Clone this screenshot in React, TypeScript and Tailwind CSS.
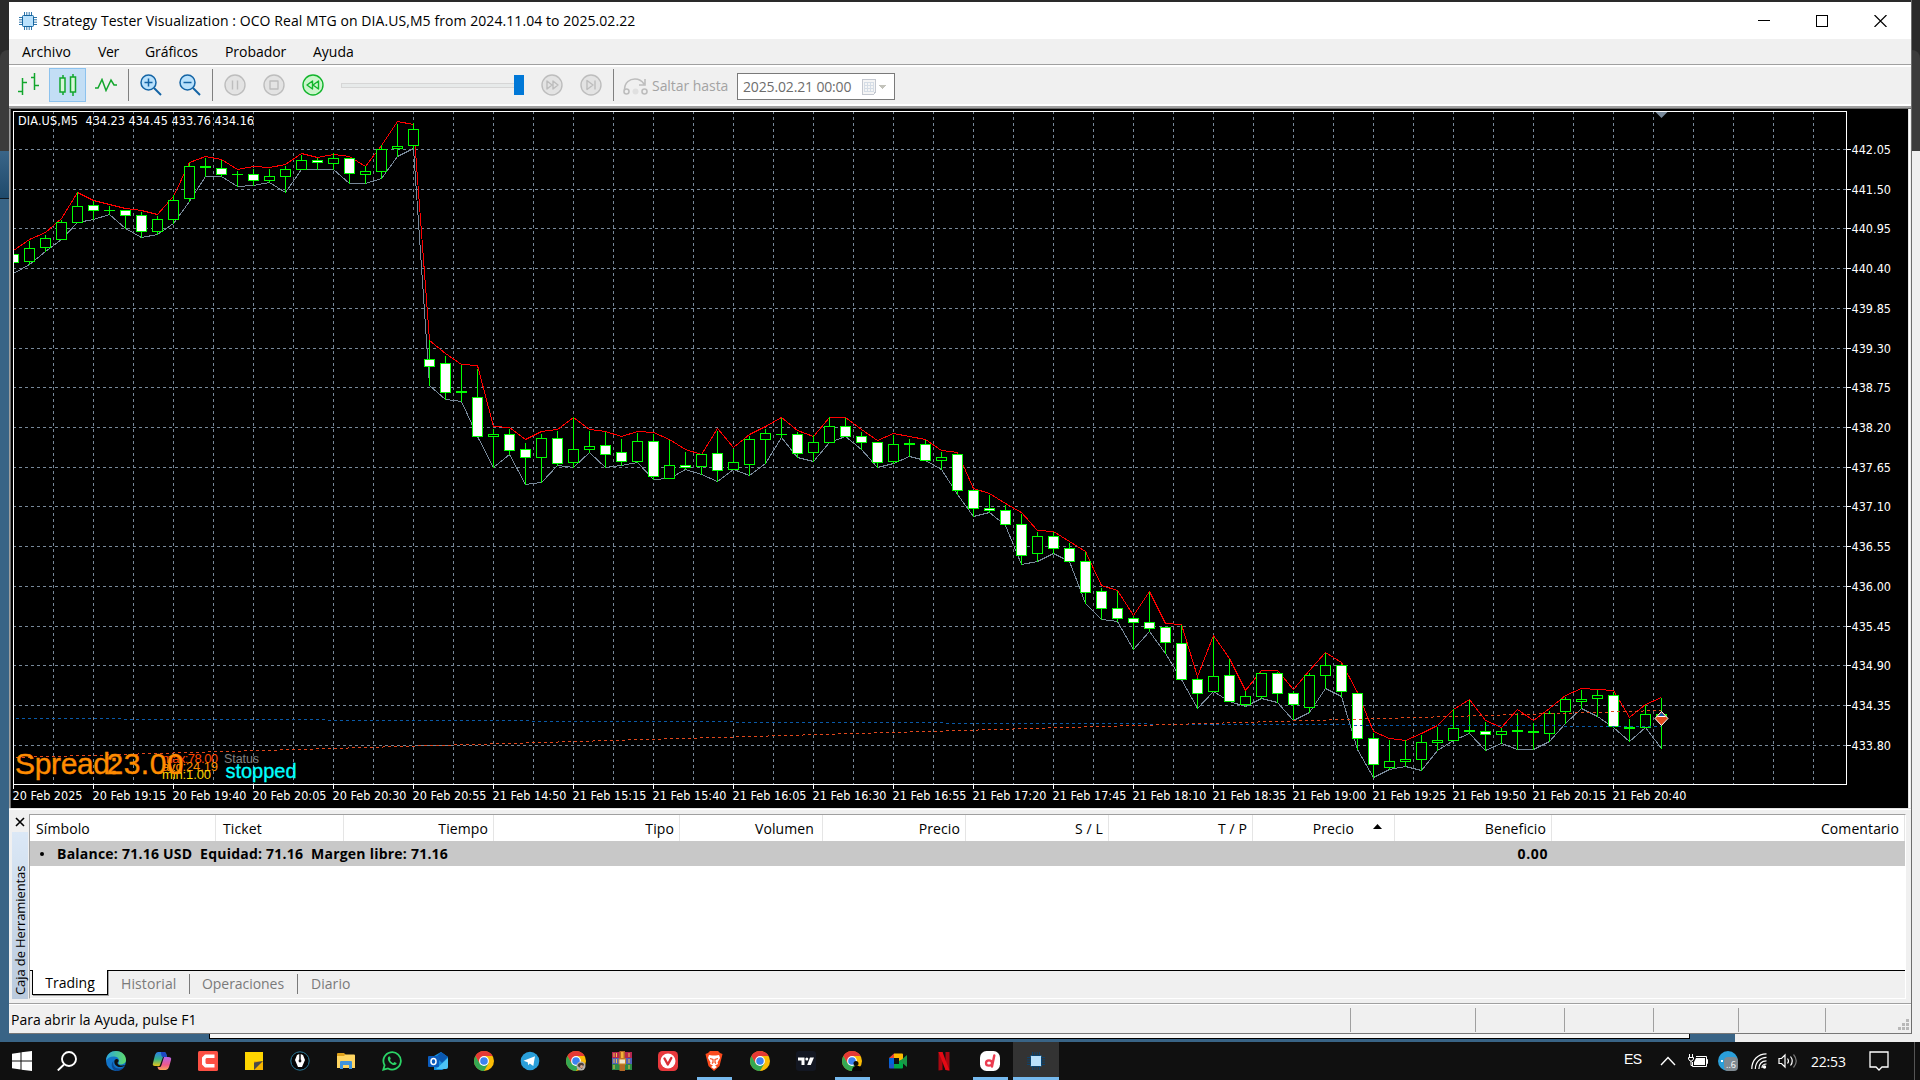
import { ReactNode } from "react";

type Candle = {
  x: number;
  high: number;
  top: number;
  bottom: number;
  low: number;
  down: boolean;
  upper: number;
};

// [high, top, bottom, low, bearish, upper band]
const rows: number[][] = [
  [254, 254, 262, 262, 1, 250],
  [241, 248, 261, 264, 0, 239],
  [235, 238, 247, 251, 0, 232],
  [220, 222, 239, 239, 0, 218],
  [192, 206, 222, 222, 0, 192],
  [201, 205, 210, 219, 1, 200],
  [206, 210, 210, 214, 0, 204],
  [210, 210, 215, 228, 1, 208],
  [212, 215, 231, 237, 1, 210],
  [216, 219, 231, 234, 0, 214],
  [195, 200, 219, 223, 0, 196],
  [163, 166, 198, 201, 0, 162],
  [158, 166, 167, 176, 0, 156],
  [160, 168, 174, 176, 1, 159],
  [171, 174, 174, 186, 0, 169],
  [169, 174, 180, 185, 1, 166],
  [169, 176, 180, 182, 0, 167],
  [166, 169, 176, 192, 0, 164],
  [155, 160, 169, 169, 0, 153],
  [158, 160, 162, 169, 1, 157],
  [153, 158, 163, 169, 0, 154],
  [158, 158, 173, 183, 1, 156],
  [166, 171, 174, 183, 0, 166],
  [145, 149, 171, 178, 0, 145],
  [124, 146, 148, 156, 0, 121],
  [123, 129, 145, 148, 0, 124],
  [340, 359, 366, 385, 1, 340],
  [356, 363, 392, 399, 1, 353],
  [365, 391, 392, 401, 0, 364],
  [369, 397, 436, 436, 1, 365],
  [429, 434, 436, 467, 0, 426],
  [429, 434, 450, 454, 1, 427],
  [443, 449, 457, 484, 1, 439],
  [434, 438, 457, 482, 0, 431],
  [431, 438, 463, 465, 1, 429],
  [417, 449, 462, 467, 0, 417],
  [431, 446, 449, 452, 0, 429],
  [432, 445, 454, 467, 1, 431],
  [439, 452, 461, 465, 1, 436],
  [433, 441, 461, 462, 0, 431],
  [434, 441, 476, 479, 1, 432],
  [440, 465, 478, 478, 0, 439],
  [452, 465, 467, 469, 1, 449],
  [454, 454, 466, 474, 0, 454],
  [431, 453, 470, 481, 1, 428],
  [449, 462, 469, 469, 0, 447],
  [436, 439, 464, 475, 0, 434],
  [429, 433, 439, 463, 0, 426],
  [418, 434, 434, 437, 0, 417],
  [432, 434, 453, 457, 1, 430],
  [435, 442, 452, 461, 0, 436],
  [417, 426, 442, 442, 0, 417],
  [418, 426, 436, 436, 1, 417],
  [432, 436, 442, 449, 1, 429],
  [442, 442, 462, 467, 1, 440],
  [435, 444, 461, 463, 0, 433],
  [439, 443, 444, 456, 0, 436],
  [440, 444, 460, 460, 1, 439],
  [452, 457, 460, 469, 0, 450],
  [454, 454, 490, 494, 1, 452],
  [490, 490, 508, 516, 1, 488],
  [495, 508, 510, 512, 1, 493],
  [505, 510, 524, 525, 1, 503],
  [514, 524, 555, 564, 1, 512],
  [532, 536, 553, 561, 0, 530],
  [532, 536, 548, 553, 1, 531],
  [543, 548, 561, 561, 1, 541],
  [552, 561, 592, 603, 1, 551],
  [588, 591, 608, 619, 1, 585],
  [591, 608, 618, 621, 1, 590],
  [616, 618, 622, 649, 1, 615],
  [592, 622, 628, 631, 1, 591],
  [627, 627, 642, 653, 1, 623],
  [625, 643, 679, 679, 1, 624],
  [678, 679, 693, 708, 1, 676],
  [637, 676, 691, 691, 0, 635],
  [659, 675, 701, 701, 1, 658],
  [691, 696, 704, 706, 0, 690],
  [673, 673, 696, 698, 0, 670],
  [672, 673, 693, 702, 1, 670],
  [691, 693, 704, 720, 1, 689],
  [673, 675, 707, 712, 0, 670],
  [653, 665, 675, 688, 0, 652],
  [664, 665, 691, 696, 1, 662],
  [693, 693, 738, 749, 1, 692],
  [733, 738, 764, 777, 1, 731],
  [740, 761, 767, 769, 0, 738],
  [740, 759, 761, 766, 0, 740],
  [735, 742, 759, 770, 0, 733],
  [727, 740, 742, 750, 0, 725],
  [709, 728, 740, 740, 0, 709],
  [700, 730, 731, 733, 0, 699],
  [722, 731, 734, 750, 1, 720],
  [728, 731, 734, 743, 0, 727],
  [713, 730, 731, 749, 0, 709],
  [723, 731, 732, 749, 0, 720],
  [711, 713, 733, 741, 0, 708],
  [697, 699, 711, 723, 0, 695],
  [690, 699, 701, 708, 0, 688],
  [690, 695, 698, 716, 0, 689],
  [692, 695, 726, 727, 1, 690],
  [719, 727, 728, 741, 0, 717],
  [705, 714, 727, 727, 0, 704],
  [698, 714, 717, 748, 0, 697],
];

const candles: Candle[] = rows.map(([high, top, bottom, low, down, upper], i) => ({
  x: 13 + i * 16,
  high,
  top,
  bottom,
  low,
  down: down === 1,
  upper,
}));

const priceLevels: [number, string][] = [
  [149, "442.05"],
  [189, "441.50"],
  [228, "440.95"],
  [268, "440.40"],
  [308, "439.85"],
  [348, "439.30"],
  [387, "438.75"],
  [427, "438.20"],
  [467, "437.65"],
  [506, "437.10"],
  [546, "436.55"],
  [586, "436.00"],
  [626, "435.45"],
  [665, "434.90"],
  [705, "434.35"],
  [745, "433.80"],
];

const times = [
  "20 Feb 2025",
  "20 Feb 19:15",
  "20 Feb 19:40",
  "20 Feb 20:05",
  "20 Feb 20:30",
  "20 Feb 20:55",
  "21 Feb 14:50",
  "21 Feb 15:15",
  "21 Feb 15:40",
  "21 Feb 16:05",
  "21 Feb 16:30",
  "21 Feb 16:55",
  "21 Feb 17:20",
  "21 Feb 17:45",
  "21 Feb 18:10",
  "21 Feb 18:35",
  "21 Feb 19:00",
  "21 Feb 19:25",
  "21 Feb 19:50",
  "21 Feb 20:15",
  "21 Feb 20:40",
];

const verticals = Array.from({ length: 45 }, (_, i) => 53 + i * 40);

const PriceChart = () => {
  const upper = candles.map((c) => `${c.x + 0.5},${c.upper + 0.5}`).join(" ");
  const lower = candles.map((c, i) => `${c.x + 0.5},${(i === 0 ? 273 : c.low) + 0.5}`).join(" ");

  return (
    <svg
      className="block bg-black font-['DejaVu_Sans_Condensed','DejaVu_Sans',sans-serif] text-[12.5px]"
      width="1897"
      height="699"
      viewBox="11 109 1897 699"
    >
      <clipPath id="plot">
        <rect x="14" y="112" width="1832" height="672" />
      </clipPath>
      <g shapeRendering="crispEdges" clipPath="url(#plot)">
        <g stroke="#778899" strokeDasharray="3 3">
          {priceLevels.map(([y]) => (
            <line key={y} x1="13" x2="1846" y1={y + 0.5} y2={y + 0.5} />
          ))}
          {verticals.map((x) => (
            <line key={x} x1={x + 0.5} x2={x + 0.5} y1="111" y2="784" />
          ))}
        </g>
        <polyline points={lower} fill="none" stroke="#778899" />
        <polyline points={upper} fill="none" stroke="#ff0000" />
        <g stroke="#00ff00">
          {candles.map((c) => (
            <g key={c.x}>
              <line x1={c.x + 0.5} x2={c.x + 0.5} y1={c.high} y2={c.low + 1} />
              {c.bottom === c.top ? (
                <line x1={c.x - 5} x2={c.x + 6} y1={c.top + 0.5} y2={c.top + 0.5} />
              ) : (
                <rect
                  x={c.x - 4.5}
                  y={c.top + 0.5}
                  width="10"
                  height={c.bottom - c.top}
                  fill={c.down ? "#ffffff" : "#000000"}
                />
              )}
            </g>
          ))}
        </g>
        <line x1="16" y1="718.5" x2="1661" y2="726.5" stroke="#0a5aa8" strokeDasharray="3 3" />
        <line x1="16" y1="757.5" x2="1661" y2="710.5" stroke="#e1471c" strokeDasharray="3 3" />
      </g>

      {/* open / close position markers */}
      <path d="M1661.5 711.5 L1668 718.5 L1661.5 725.5 L1655 718.5 Z" fill="#e1471c" stroke="#fff" />
      <path d="M1661.5 712.5 L1665 716.5 L1658 716.5 Z" fill="#0a5aa8" />
      <path d="M1657.5 716.5 H1665.5" stroke="#fff" />
      <path d="M1655.5 112 H1667.5 L1661.5 118 Z" fill="#778899" />

      <g shapeRendering="crispEdges" stroke="#ffffff">
        <path d="M13.5 784.5 V111.5 H1846.5 V784.5 Z" fill="none" />
        {priceLevels.map(([y]) => (
          <line key={y} x1="1846" x2="1851" y1={y + 0.5} y2={y + 0.5} />
        ))}
        {times.map((t, i) => (
          <line key={t} x1={13.5 + i * 80} x2={13.5 + i * 80} y1="784" y2="789" />
        ))}
      </g>

      <g fill="#ffffff">
        {priceLevels.map(([y, label]) => (
          <text key={label} x="1851.5" y={y + 5} textLength="39.5">
            {label}
          </text>
        ))}
        {times.map((t, i) => (
          <text key={t} x={12.5 + i * 80} y="800" textLength={i === 0 ? 70 : 74}>
            {t}
          </text>
        ))}
        <text x="18" y="125" textLength="60">
          DIA.US,M5
        </text>
        <text x="85.5" y="125" textLength="168.5">
          434.23 434.45 433.76 434.16
        </text>
      </g>

      <g className="font-['Liberation_Sans',Arial,sans-serif]">
        <text x="162" y="763" fontSize="13" fill="#ff4500" textLength="56">
          max:78.00
        </text>
        <text x="162" y="771" fontSize="13" fill="#ff8c00" textLength="56">
          avg:24.19
        </text>
        <text x="162" y="779" fontSize="13" fill="#ffd700" textLength="49">
          min:1.00
        </text>
        <text x="224" y="763" fontSize="12.5" fill="#808080" textLength="35">
          Status
        </text>
        <text x="225.500" y="778" fontSize="20" fill="#00ffff" stroke="#00ffff" strokeWidth="0.3" textLength="71">
          stopped
        </text>
        <g fontSize="30" fill="#ff8c00" stroke="#ff8c00" strokeWidth="0.4">
          <text x="15" y="774" textLength="103">
            Spread:
          </text>
          <text x="106.5" y="774" textLength="77">
            23.00
          </text>
        </g>
      </g>
    </svg>
  );
};

const ChipIcon = ({ size, dark }: { size: number; dark?: boolean }) => (
  <svg width={size} height={size} viewBox="0 0 18 18">
    <path
      d="M5.5 0V18M7.8 0V18M10.2 0V18M12.5 0V18M0 5.5H18M0 7.8H18M0 10.2H18M0 12.5H18"
      stroke={dark ? "#0b4470" : "#1565a0"}
      strokeWidth="0.9"
    />
    <rect x="3.5" y="3.5" width="11" height="11" rx="1" fill="#b9e1fc" stroke={dark ? "#0b4470" : "#1565a0"} />
  </svg>
);

const TitleBar = () => (
  <div className="flex h-[37px] shrink-0 items-center bg-white pl-[10px] pr-6">
    <ChipIcon size={18} />
    <span className="ml-[6px] mt-[-1px] text-[14px] tracking-[0.07px] text-black">
      Strategy Tester Visualization : OCO Real MTG on DIA.US,M5 from 2024.11.04 to 2025.02.22
    </span>
    <div className="ml-auto flex items-center gap-[46px]">
      <svg width="12" height="12" viewBox="0 0 12 12" shapeRendering="crispEdges">
        <path d="M0 5.5H12" stroke="#000" />
      </svg>
      <svg width="12" height="12" viewBox="0 0 12 12" shapeRendering="crispEdges">
        <path d="M.5 .5H11.5V11.5H.5Z" stroke="#000" fill="none" />
      </svg>
      <svg width="13" height="12" viewBox="0 0 13 12">
        <path d="M.5 0L12.5 12M12.5 0L.5 12" stroke="#000" strokeWidth="1.2" />
      </svg>
    </div>
  </div>
);

const MenuBar = () => (
  <div className="flex h-[25px] shrink-0 items-center gap-[26px] bg-[#f0f0f0] pl-[13px] text-[14px] leading-none text-black">
    <span className="w-[50px]">Archivo</span>
    <span className="w-[21px] tracking-[-0.3px]">Ver</span>
    <span className="w-[54px] tracking-[-0.1px]">Gráficos</span>
    <span className="w-[62px] tracking-[-0.05px]">Probador</span>
    <span className="w-[42px]">Ayuda</span>
  </div>
);

const RoundButton = ({ active, children }: { active?: boolean; children: ReactNode }) => (
  <svg
    width="22"
    height="22"
    viewBox="0 0 22 22"
    fill="none"
    stroke={active ? "#12b52c" : "#bdbdbd"}
    strokeWidth="1.4"
    strokeLinejoin="round"
  >
    <circle cx="11" cy="11" r="10" fill={active ? "#ccf5cc" : "#e3e3e3"} />
    {children}
  </svg>
);

const Magnifier = ({ plus }: { plus?: boolean }) => (
  <svg width="22" height="22" viewBox="0 0 22 22" fill="none" stroke="#1464a5" strokeWidth="1.5">
    <circle cx="8.5" cy="8.5" r="7.5" fill="#b9e1fc" />
    <path d="M14 14L21 21" strokeWidth="2" />
    <path d={plus ? "M4.5 8.5H12.5M8.5 4.5V12.5" : "M4.5 8.5H12.5"} />
  </svg>
);

const Divider = () => <div className="h-8 w-px bg-[#808080]" />;

const Toolbar = () => (
  <div className="flex h-[37px] shrink-0 items-center bg-[#f0f0f0] pb-px pl-[9px]">
    <svg className="mt-[-2px]" width="22" height="22" viewBox="0 0 22 22" fill="none" stroke="#12a62c" strokeWidth="1.5">
      <path d="M4.5 5V22M0 18.5H4M5 9.5H9M16.5 0V17M13 4.5H16M17 12.5H21" />
    </svg>
    <div className="ml-[9px] flex h-[34px] w-[37px] items-center justify-center border border-[#8cc2ee] bg-[#c3def5]">
      <svg width="18" height="22" viewBox="0 0 18 22" fill="#d8f6d8" stroke="#12a62c" strokeWidth="1.5">
        <path d="M4 1V21M14 0V22" />
        <rect x="1" y="4" width="5" height="14" />
        <rect x="11.5" y="3" width="5" height="15" />
      </svg>
    </div>
    <svg className="ml-[9px]" width="22" height="14" viewBox="0 0 22 14" fill="none" stroke="#12a62c" strokeWidth="1.5">
      <path d="M0 10H3L7 1.5L11 12.5L16 2L19 7H22" />
    </svg>
    <div className="ml-[11px]">
      <Divider />
    </div>
    <div className="ml-[11px] flex items-center gap-[17px]">
      <Magnifier plus />
      <Magnifier />
    </div>
    <div className="ml-[11px]">
      <Divider />
    </div>
    <div className="ml-[11px] flex items-center gap-[17px]">
      <RoundButton>
        <path d="M8.5 6.5V15.5M13.5 6.5V15.5" />
      </RoundButton>
      <RoundButton>
        <rect x="7" y="7" width="8" height="8" />
      </RoundButton>
      <RoundButton active>
        <path d="M10.5 7V15L5 11ZM16.5 7V15L11 11Z" />
      </RoundButton>
    </div>
    <div className="relative ml-[17px] flex h-5 w-[183px] items-center">
      <div className="h-[5px] w-full border border-[#d6d6d6] bg-[#e7eaea]" />
      <div className="absolute right-0 top-0 h-5 w-[10px] bg-[#0078d7]" />
    </div>
    <div className="ml-[17px] flex items-center gap-[17px]">
      <RoundButton>
        <path d="M6 7V15L11 11ZM12 7V15L17 11Z" />
      </RoundButton>
      <RoundButton>
        <path d="M7 6.5V15.5L13 11ZM15 6.5V15.5" />
      </RoundButton>
    </div>
    <div className="ml-[11px]">
      <Divider />
    </div>
    <svg className="ml-[9px] mt-[3px]" width="25" height="19" viewBox="0 0 25 19" fill="none" stroke="#bdbdbd" strokeWidth="1.6">
      <path d="M1.5 13C1.5 5 7 2 12 2C16 2 19 4 21 7M22 2V8H16" />
      <circle cx="3.5" cy="14.5" r="2.5" />
      <circle cx="21.5" cy="14.5" r="2.5" />
      <circle cx="12.5" cy="14.5" r="3" fill="#e0e0e0" stroke="none" />
    </svg>
    <span className="ml-[4px] mt-px w-[77px] whitespace-nowrap text-[14px] tracking-[-0.05px] text-[#a3a3a3]">
      Saltar hasta
    </span>
    <div className="ml-[8px] mt-[3px] flex h-[27px] w-[158px] items-center border border-[#7a7a7a] bg-white pl-[5px]">
      <span className="w-[119px] whitespace-nowrap text-[14px] tracking-[-0.15px] text-[#6d6d6d]">2025.02.21 00:00</span>
      <svg width="25" height="16" viewBox="0 0 25 16" shapeRendering="crispEdges">
        <path d="M.5 .5H13.5V13L11.5 15.5H.5Z" fill="#f5f5f5" stroke="#c4c8d0" />
        <path d="M2.5 3V13M5.5 3V13M8.5 3V13M11.5 3V13M2 3.5H12M2 6.5H12M2 9.5H12M2 12.5H12" stroke="#d5dde6" />
        <path d="M16 5.5H25L20.5 10Z" fill="#c3c3bb" />
      </svg>
    </div>
  </div>
);

const columns = [
  { name: "Símbolo", cell: "w-[186px] justify-start pl-[6px]" },
  { name: "Ticket", cell: "w-[128px] justify-start pl-[7px]" },
  { name: "Tiempo", cell: "w-[150px] justify-end pr-[5px]" },
  { name: "Tipo", cell: "w-[186px] justify-end pr-[5px]" },
  { name: "Volumen", cell: "w-[143px] justify-end pr-[8px]" },
  { name: "Precio", cell: "w-[143px] justify-end pr-[5px]" },
  { name: "S / L", cell: "w-[143px] justify-end pr-[5px]" },
  { name: "T / P", cell: "w-[144px] justify-end pr-[5px]" },
  { name: "Precio", cell: "w-[142px] justify-end pr-[12px]", sorted: true },
  { name: "Beneficio", cell: "w-[157px] justify-end pr-[5px]" },
  { name: "Comentario", cell: "flex-1 justify-end pr-[5px]" },
];

const Toolbox = () => (
  <div className="flex h-[189px] shrink-0 bg-[#f0f0f0] pl-[2px] pt-[4px]">
    <div className="flex w-[18px] flex-col items-center">
      <svg className="mt-[3px] shrink-0" width="10" height="10" viewBox="0 0 10 10">
        <path d="M1 1L9 9M9 1L1 9" stroke="#000" strokeWidth="1.6" />
      </svg>
      <div className="mr-[1px] mt-[5px] flex h-[167px] w-4 rotate-180 items-center justify-start bg-gradient-to-t from-[#dbe8f6] to-[#bacadd] pt-[4px] [writing-mode:vertical-rl]">
        <span className="whitespace-nowrap text-[13px] leading-4 tracking-[-0.1px] text-black">Caja de Herramientas</span>
      </div>
    </div>
    <div className="mr-[5px] flex flex-1 flex-col border border-b-white border-l-[#a0a0a0] border-r-white border-t-[#a0a0a0] text-[14px] text-black">
      <div className="flex h-[26px] shrink-0 bg-white">
        {columns.map((col, i) => (
          <div
            key={i}
            className={`flex items-center border-r border-[#e5e5e5] tracking-[0.1px] ${col.cell}`}
          >
            {col.name}
            {col.sorted && (
              <svg className="ml-[19px] mt-[-3px]" width="9" height="5" viewBox="0 0 9 5">
                <path d="M0 5L4.5 0L9 5Z" fill="#000" />
              </svg>
            )}
          </div>
        ))}
      </div>
      <div className="flex h-[25px] shrink-0 items-center bg-[#c8c8c8] font-bold">
        <span className="ml-[10px] h-1 w-1 rounded-full bg-black" />
        <span className="ml-[13px] whitespace-pre tracking-[0.23px]">
          {"Balance: 71.16 USD  Equidad: 71.16  Margen libre: 71.16"}
        </span>
        <span className="ml-auto mr-[357px] tracking-[0.6px]">0.00</span>
      </div>
      <div className="flex-1 bg-white" />
      <div className="flex h-[28px] shrink-0 items-start text-[#7a7a7a]">
        <div className="h-px w-[2px] bg-black" />
        <div className="flex h-[25px] w-[76px] items-center justify-center border-b border-l border-r border-black bg-white text-black shadow-[1px_1px_0_#a0a0a0]">
          <span>Trading</span>
        </div>
        <div className="flex h-[26px] flex-1 items-center border-t border-black">
          <span className="ml-[13px] w-[55px] tracking-[0.1px]">Historial</span>
          <span className="ml-[13px] h-5 w-px bg-[#7a7a7a]" />
          <span className="ml-[12px] w-[83px] tracking-[-0.05px]">Operaciones</span>
          <span className="ml-[12px] h-5 w-px bg-[#7a7a7a]" />
          <span className="ml-[13px] tracking-[0.05px]">Diario</span>
        </div>
      </div>
    </div>
  </div>
);

const StatusBar = () => (
  <div className="flex h-[30px] shrink-0 items-center border-t border-[#a0a0a0] bg-[#f0f0f0] text-[14px] text-black shadow-[inset_0_1px_0_#fff]">
    <span className="ml-[2px] w-[1339px] pt-px">Para abrir la Ayuda, pulse F1</span>
    <div className="mt-[2px] h-6 w-[125px] border-l border-[#a0a0a0]" />
    <div className="mt-[2px] h-6 w-[89px] border-l border-[#a0a0a0]" />
    <div className="mt-[2px] h-6 w-[89px] border-l border-[#a0a0a0]" />
    <div className="mt-[2px] h-6 w-[85px] border-l border-[#a0a0a0]" />
    <div className="mt-[2px] h-6 w-[87px] border-l border-[#a0a0a0]" />
    <div className="mt-[2px] h-6 flex-1 border-l border-[#a0a0a0]" />
    <svg className="mr-[2px] mt-[12px]" width="11" height="11" viewBox="0 0 11 11" fill="#b8b8b8" shapeRendering="crispEdges">
      <path d="M8 0h3v3h-3zM8 4h3v3h-3zM8 8h3v3h-3zM4 4h3v3h-3zM4 8h3v3h-3zM0 8h3v3h-3z" />
    </svg>
  </div>
);

const Chrome = ({ badge }: { badge?: "photo" | "dark" }) => (
  <svg width="20" height="20" viewBox="0 0 20 20">
    <circle cx="10" cy="10" r="10" fill="#fbbc05" />
    <path d="M1.34 5A10 10 0 0 1 18.66 5H10L5.5 12.5Z" fill="#e53935" />
    <path d="M1.34 5A10 10 0 0 0 10 20L14.5 12.4L10 10L5.7 12.4Z" fill="#34a853" />
    <circle cx="10" cy="10" r="4.9" fill="#fff" />
    <circle cx="10" cy="10" r="3.8" fill="#3b82f0" />
    {badge === "photo" && (
      <>
        <circle cx="15" cy="15" r="4.5" fill="#b9b2ad" />
        <path d="M11.5 15C11.5 11.5 17 10.5 18 13.5L16 18Z" fill="#51423c" />
        <circle cx="15.5" cy="15.5" r="1.5" fill="#d9a58c" />
      </>
    )}
    {badge === "dark" && (
      <>
        <circle cx="14" cy="12.5" r="2.5" fill="#0a0a0a" />
        <path d="M10 20C10 14 18 13 20 18V20Z" fill="#050505" />
      </>
    )}
  </svg>
);

const apps: { icon: ReactNode; bar?: boolean; current?: boolean }[] = [
  {
    icon: (
      <svg width="20" height="20" viewBox="0 0 20 20">
        <defs>
          <linearGradient id="edgeTop" x1="0" x2="1">
            <stop offset="0" stopColor="#2aa5e0" />
            <stop offset="1" stopColor="#5fdb6a" />
          </linearGradient>
        </defs>
        <circle cx="10" cy="10" r="10" fill="#1173c9" />
        <path d="M0 10C0 3 5 0 10 0C16 0 20 4 20 9C20 12 17 13.5 14.5 13.5C12.5 13.5 12 12.5 12.7 11.5C14 8.5 12 5.5 8 5.5C4 5.5 1 7.5 0 10Z" fill="url(#edgeTop)" />
        <path d="M7.5 10C6 14 9 18 14 17.5C16 17.3 18 16 19 14.5C18 18 14 20 10.5 20C6 19 4 13 7.5 10Z" fill="#0c4a94" />
        <path d="M8.5 9.5C7.5 13 10.5 16.5 15 16C17 15.8 18.5 15 19.3 14C18 14.5 12 15.5 11.5 12C11.5 11 13 10.5 12.5 9C11.5 7.5 9.5 7.5 8.5 9.5Z" fill="#101010" />
      </svg>
    ),
  },
  {
    icon: (
      <svg width="20" height="20" viewBox="0 0 20 20">
        <defs>
          <linearGradient id="copA" x1="0" y1="0" x2="0" y2="1">
            <stop offset="0" stopColor="#2b7de9" />
            <stop offset=".5" stopColor="#35b38a" />
            <stop offset="1" stopColor="#f2c511" />
          </linearGradient>
          <linearGradient id="copB" x1="0" y1="0" x2="0" y2="1">
            <stop offset="0" stopColor="#b565e8" />
            <stop offset=".6" stopColor="#f0598b" />
            <stop offset="1" stopColor="#f9a55a" />
          </linearGradient>
        </defs>
        <path d="M6 1H12Q14 1 14.5 4L15 6H11L8 14Q7.5 16 5 15H3Q0 15 1 12L3 4Q4 1 6 1Z" fill="url(#copA)" />
        <path d="M9 1H12Q14 1 14.5 4L15 6H11Q9 6 9 1Z" fill="#1c48c4" />
        <path d="M14 19H8Q6 19 5.5 16H8Q9 16 9.5 14L12 6H16Q20 6 19 9L17 16Q16 19 14 19Z" fill="url(#copB)" />
      </svg>
    ),
  },
  {
    icon: (
      <svg width="20" height="20" viewBox="0 0 20 20">
        <rect width="20" height="20" rx="1.5" fill="#fc5044" />
        <path d="M16.5 3.5H7L4 6.5V13.5L7 16.5H16.5V13H8.5L7.5 12V8L8.5 7H16.5Z" fill="#fff" />
      </svg>
    ),
  },
  {
    icon: (
      <svg width="20" height="20" viewBox="0 0 20 20">
        <path d="M1 1H19V10L10 19H1Z" fill="#ffd600" />
        <path d="M10 19V10H19V19Z" fill="#f5b400" />
        <path d="M10 19V11.5L19 10Z" fill="#4a4a4a" />
      </svg>
    ),
  },
  {
    icon: (
      <svg width="20" height="20" viewBox="0 0 20 20">
        <circle cx="10" cy="10" r="9.2" fill="#050505" stroke="#2b7a99" />
        <path d="M7 4L5 9L8 16H12L15 9L13 4L10.7 3V9.5H9.3V3Z" fill="#fff" />
        <circle cx="10" cy="10" r="1.4" fill="#111" />
      </svg>
    ),
  },
  {
    icon: (
      <svg width="20" height="20" viewBox="0 0 20 20">
        <path d="M1 3Q1 2 2 2H8L10 4V7H1Z" fill="#e0a21b" />
        <path d="M1 5H8L9.5 3.5H18Q19 3.5 19 4.5V17H1Z" fill="#ffd561" />
        <path d="M4 18V11Q4 10 5 10H15Q16 10 16 11V18H13V14H7V18Z" fill="#3f93dc" />
      </svg>
    ),
  },
  {
    icon: (
      <svg width="20" height="20" viewBox="0 0 20 20" fill="none" stroke="#2bd366" strokeWidth="1.8">
        <path d="M1.3 18.7L2.6 14.2A8.7 8.7 0 1 1 6 17.5Z" />
        <path d="M6.7 5.5C5 7 6 10 8 12C10 14 13 15 14.5 13L14.5 12L12.3 11L11.2 12.2C9.5 11.5 8.5 10.3 8 9L8.8 7.8L7.9 5.5Z" fill="#2bd366" stroke="none" />
      </svg>
    ),
  },
  {
    icon: (
      <svg width="20" height="20" viewBox="0 0 20 20">
        <path d="M6 5L13 1L20 6V16L14 19H6Z" fill="#1490df" />
        <path d="M8 6L13 1L20 6L14 12Z" fill="#0a58b0" />
        <path d="M20 7V16Q20 18 18 18H8Z" fill="#4cc3f5" />
        <rect y="5" width="11" height="11" rx="1" fill="#0b5cbd" />
        <ellipse cx="5.5" cy="10.5" rx="2.5" ry="3" fill="none" stroke="#fff" strokeWidth="1.5" />
      </svg>
    ),
  },
  { icon: <Chrome /> },
  {
    icon: (
      <svg width="20" height="20" viewBox="0 0 20 20">
        <circle cx="10" cy="10" r="9.3" fill="#2a9fda" />
        <path d="M3.5 9.8L15 5.2L13.3 15L9.8 12.6L8.2 14.2L7.7 11.3Z" fill="#fff" />
      </svg>
    ),
  },
  { icon: <Chrome badge="photo" /> },
  {
    icon: (
      <svg width="20" height="20" viewBox="0 0 20 20">
        <rect y="1" width="20" height="6" fill="#b5264f" />
        <rect y="7" width="20" height="6" fill="#5160b8" />
        <rect y="13" width="20" height="6" fill="#2c8a45" />
        <path d="M2 2V6M2 8V12M2 14V18M4.5 2V6M4.5 8V12M17 2V6M17 8V12M17 14V18" stroke="#f0c24b" />
        <rect x="7.5" y="0" width="5.5" height="20" fill="#b56a25" />
        <rect x="7" y="8" width="6.5" height="5" fill="#f2e6cf" stroke="#c98525" />
        <path d="M9 1H11.5V7H9Z" fill="#f3b33a" />
      </svg>
    ),
  },
  {
    icon: (
      <svg width="20" height="20" viewBox="0 0 20 20">
        <rect width="20" height="20" rx="4.5" fill="#e8393d" />
        <circle cx="10" cy="10" r="7.5" fill="#fff" />
        <path d="M6.5 7.5L9.8 13.5L13.3 7" fill="none" stroke="#d92f35" strokeWidth="2.4" strokeLinecap="round" strokeLinejoin="round" />
      </svg>
    ),
  },
  {
    bar: true,
    icon: (
      <svg width="20" height="20" viewBox="0 0 20 20">
        <path d="M6 0H14L16 2L18.5 3L17.8 6L15.5 15L10 20L4.5 15L2.2 6L1.5 3L4 2Z" fill="#fb4a1c" />
        <path d="M5 4L8 4.5H12L15 4L16 7L13.5 11.5L14 13L11 14.5L13 16L10 18L7 16L9 14.5L6 13L6.5 11.5L4 7Z" fill="#fff" />
        <path d="M6 7.5L9 8.5L9 11.5L8 12.5M14 7.5L11 8.5V11.5L12 12.5" stroke="#fb4a1c" fill="none" strokeWidth="1.2" />
      </svg>
    ),
  },
  { icon: <Chrome /> },
  {
    icon: (
      <svg width="20" height="20" viewBox="0 0 20 20">
        <rect width="20" height="20" rx="3" fill="#131722" />
        <path d="M2 6.5H8.5V14H5.5V9.5H2ZM14 6.5H18L14.8 14H11.2Z" fill="#fff" />
        <circle cx="10.8" cy="8" r="1.5" fill="#fff" />
      </svg>
    ),
  },
  { icon: <Chrome badge="dark" />, bar: true },
  {
    icon: (
      <svg width="20" height="20" viewBox="0 0 20 20">
        <path d="M6 2.5V7H1Z" fill="#ea4335" />
        <path d="M6 2.5H14Q15 2.5 15 3.5V9L11 10V7H6Z" fill="#ffba00" />
        <path d="M1 7H6V13H1Z" fill="#0066da" />
        <path d="M1 13H6V17.5H2Q1 17.5 1 16.5Z" fill="#1d58c7" />
        <path d="M6 13H11V10L15 8V16.5Q15 17.5 14 17.5H6Z" fill="#00ac47" />
        <path d="M12 10L19 4V16Z" fill="#1a9646" />
      </svg>
    ),
  },
  {
    icon: (
      <svg width="20" height="20" viewBox="0 0 20 20">
        <path d="M4.5 1H8.5V19L4.5 19.5ZM11.5 1H15.5V19.5L11.5 19Z" fill="#a90711" />
        <path d="M4.5 1H8.5L15.5 19.5L11.5 19Z" fill="#e50914" />
      </svg>
    ),
  },
  {
    bar: true,
    icon: (
      <svg width="20" height="20" viewBox="0 0 20 20">
        <rect width="20" height="20" rx="6.5" fill="#fff" />
        <ellipse cx="9" cy="12" rx="3" ry="2.7" fill="none" stroke="#ec3c50" strokeWidth="2.3" />
        <path d="M14.3 4.5L12 15.5" stroke="#ec3c50" strokeWidth="2.4" strokeLinecap="round" />
      </svg>
    ),
  },
  { icon: <ChipIcon size={18} dark />, bar: true, current: true },
];

const Taskbar = () => (
  <div className="flex h-[38px] shrink-0 items-center bg-[#101010]">
    <svg className="ml-3" width="20" height="20" viewBox="0 0 20 20" fill="#fff">
      <path d="M0 2.8L8.5 1.5V9.5H0ZM9.5 1.3L20 0V9.5H9.5ZM0 10.5H8.5V18.5L0 17.2ZM9.5 10.5H20V20L9.5 18.7Z" />
    </svg>
    <svg className="ml-[25px] mr-[16px]" width="20" height="20" viewBox="0 0 20 20" fill="none" stroke="#fff" strokeWidth="1.9">
      <circle cx="12" cy="8" r="7" />
      <path d="M7 13.5L.8 19.5" />
    </svg>
    {apps.map((app, i) => (
      <div
        key={i}
        className={`relative flex h-full w-[46px] items-center justify-center ${app.current ? "bg-[#333333]" : ""}`}
      >
        {app.icon}
        {app.bar && (
          <div className={`absolute bottom-0 h-[3px] bg-[#76b9ed] ${app.current ? "w-full" : "w-[35px]"}`} />
        )}
      </div>
    ))}
    <div className="ml-auto flex items-center pr-[5px] text-white">
      <span className="mr-[19px] mt-[-3px] w-[17px] font-['Liberation_Sans',Arial,sans-serif] text-[14px] tracking-[-0.6px]">
        ES
      </span>
      <svg width="16" height="10" viewBox="0 0 16 10" fill="none" stroke="#fff" strokeWidth="1.4">
        <path d="M1 9L8 1.5L15 9" />
      </svg>
      <svg className="ml-[12px]" width="20" height="14" viewBox="0 0 20 14" fill="none" stroke="#fff">
        <path d="M8 2.5H18.5V12.5H4.5V8" />
        <path d="M18.5 5.5H19.5V9.5H18.5" />
        <path d="M8 4H17V11H6V8Z" fill="#fff" stroke="none" />
        <path d="M1.5 0V3M4.5 0V3M.5 3.5H5.5V5L4 7H2L.5 5ZM3 7V11.5H5" />
      </svg>
      <div className="relative ml-[10px] h-5 w-5 rounded-full bg-[#2a9fda]">
        <span className="absolute left-[6px] top-[6px] flex h-[14px] w-[14px] items-center justify-center rounded-[4px] bg-[#7f8a92] text-[9px] leading-none">
          ..6
        </span>
        <span className="absolute left-[3px] top-[9px] h-[2px] w-[2px] bg-white" />
      </div>
      <svg className="ml-[13px]" width="16" height="16" viewBox="0 0 16 16" fill="none" stroke="#fff" strokeWidth="1.2">
        <path d="M.8 16C.8 7 7 .8 15.5 .8M4.3 16C4.5 9 9 4.5 15.5 4.3M7.9 16C8 11 11 8 15.5 7.9" />
        <path d="M11 15C11 12.5 13 11 15.5 11" />
        <circle cx="13.5" cy="14" r="1.7" fill="#fff" stroke="none" />
      </svg>
      <svg className="ml-[11px]" width="20" height="16" viewBox="0 0 20 16" fill="none" stroke="#fff" strokeWidth="1.2">
        <path d="M1 5.5H3.5L7 2V14L3.5 10.5H1Z" />
        <path d="M9.5 5.5Q11.5 8 9.5 10.5M12.5 3.5Q16 8 12.5 12.5" />
        <path d="M15.5 1.5Q21 8 15.5 14.5" stroke="#777" />
      </svg>
      <span className="ml-[13px] w-[37px] text-[14px] tracking-[-0.2px]">22:53</span>
      <svg className="ml-[21px]" width="20" height="20" viewBox="0 0 20 20" fill="none" stroke="#fff" strokeWidth="1.3">
        <path d="M1 1H19V16H13L10 19L7 16H1Z" />
      </svg>
      <div className="ml-[25px] h-[38px] w-px bg-[#555555]" />
    </div>
  </div>
);

const App = () => {
  return (
    <div className="flex h-[1080px] w-[1920px] flex-col overflow-hidden bg-[#2a2a2a] font-['Open_Sans','Noto_Sans',sans-serif]">
      <div className="flex h-[1034px] shrink-0">
        {/* desktop to the left of the window */}
        <div className="flex w-[9px] flex-col bg-[#2a2a2a]">
          <div className="mt-[50px] h-[101px] rounded-tl-lg bg-[#3c3c3c]" />
          <div className="h-[47px] bg-gradient-to-b from-[#3a6588] to-[#1f4a6c]" />
          <div className="h-px bg-[#101820]" />
          <div className="flex-1 bg-[#396486]" />
        </div>
        <div className="flex w-[1902px] flex-col pt-[2px]">
          <TitleBar />
          <MenuBar />
          <div className="h-[3px] shrink-0 border-t border-[#a0a0a0] bg-white" />
          <Toolbar />
          <div className="h-[2px] shrink-0 bg-white" />
          <div className="h-[3px] shrink-0 border-b border-[#696969] bg-[#a0a0a0]" />
          <div className="flex h-[699px] shrink-0 bg-[#f0f0f0]">
            <div className="w-[2px] border-l border-[#a0a0a0] bg-[#696969]" />
            <PriceChart />
            <div className="w-[2px] border-l border-[#e3e3e3] bg-white" />
          </div>
          <div className="h-[2px] shrink-0 border-t border-[#e3e3e3] bg-white" />
          <Toolbox />
          <div className="flex-1 bg-[#f0f0f0]" />
          <StatusBar />
          <div className="h-px shrink-0 bg-[#777777]" />
        </div>
        <div className="flex w-[9px] flex-col border-l border-[#6e6e6e]">
          <div className="mt-[50px] h-[101px] rounded-tr-lg bg-[#3c3c3c]" />
          <div className="flex-1 bg-[#f0f0f0]" />
        </div>
      </div>
      <div className="flex h-[8px] shrink-0 bg-[#396486]">
        <div className="ml-[209px] h-[5px] w-[1481px] border-b border-l border-r border-black bg-[#f7f7f7]" />
        <div className="ml-[45px] flex-1 bg-[#efefef]" />
      </div>
      <Taskbar />
    </div>
  );
};

export default App;
